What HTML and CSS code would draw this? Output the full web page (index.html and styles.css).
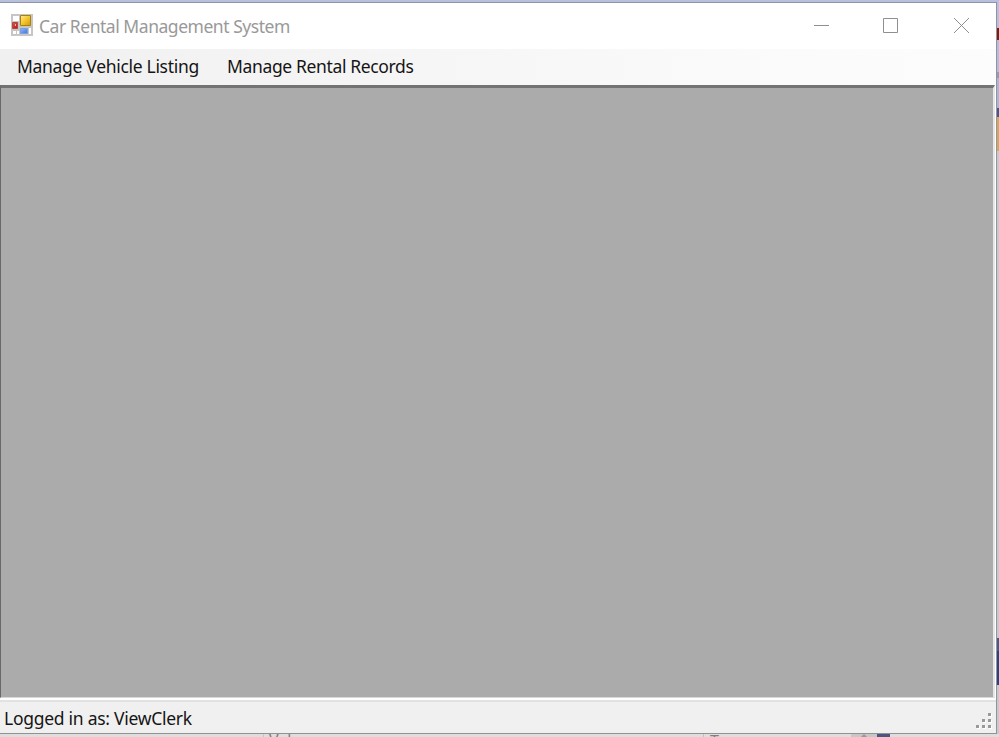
FILE: index.html
```html
<!DOCTYPE html>
<html lang="en">
<head>
<meta charset="utf-8">
<title>Car Rental Management System</title>
<link rel="stylesheet" href="styles.css">
</head>
<body>
<div class="desktop">
  <div class="main-row">
    <section class="window">
      <header class="titlebar">
        <svg class="app-icon" width="22" height="22" viewBox="0 0 22 22">
          <defs>
            <linearGradient id="gold" x2="1" y2="1"><stop stop-color="#ffeaa0"/><stop offset=".5" stop-color="#f5c52c"/><stop offset="1" stop-color="#d09a08"/></linearGradient>
            <linearGradient id="red" x2="1" y2="1"><stop stop-color="#e05a50"/><stop offset="1" stop-color="#a51c14"/></linearGradient>
            <linearGradient id="blue" x2="1" y2="1"><stop stop-color="#8fb8fa"/><stop offset="1" stop-color="#3c74dc"/></linearGradient>
          </defs>
          <path fill="#c6c6c6" d="M0 0h22v22H0z"/>
          <path fill="#fff" d="M2 2h6v5H2zM2 17h3v3H2zM6 17h2v3H6zM18 14h2v6h-2z"/>
          <path fill="url(#gold)" stroke="#a8820c" d="M9.500 1.500h10v10h-10z"/>
          <path fill="url(#red)" stroke="#b8443c" d="M1.500 8.500h5v6h-5z"/>
          <path fill="#f3b5ae" d="M4 10h1v2H4z"/>
          <path fill="url(#blue)" stroke="#7f9fdc" d="M9.500 14.500h7v5h-7z"/>
        </svg>
        <h1 class="title">Car Rental Management System</h1>
        <div class="controls">
          <svg width="15" height="15"><path d="M0 7.500h15"/></svg>
          <svg width="15" height="15"><path d="M.5.500h14v14H.500z"/></svg>
          <svg width="15" height="15"><path d="M0 0l15 15M15 0L0 15"/></svg>
        </div>
      </header>
      <nav class="menu">
        <span class="menu-item vehicles">Manage Vehicle Listing</span>
        <span class="menu-item rentals">Manage Rental Records</span>
      </nav>
      <main class="workspace"></main>
      <footer class="status">
        <span class="login">Logged in as: ViewClerk</span>
        <svg class="grip" width="17" height="17" fill="#999">
          <path fill="#fff" d="M14 2h3v3h-3zM8 8h3v3H8zM14 8h3v3h-3zM2 14h3v3H2zM8 14h3v3H8zM14 14h3v3h-3z"/>
          <path d="M13 1h3v3h-3zM7 7h3v3H7zM13 7h3v3h-3zM1 13h3v3H1zM7 13h3v3H7zM13 13h3v3h-3z"/>
        </svg>
      </footer>
    </section>
    <div class="side"></div>
  </div>
  <div class="behind">
    <span class="cell first"></span>
    <span class="cell second">Val</span>
    <span class="cell third">T</span>
    <span class="scroll"><svg width="6" height="3"><path fill="#999" d="M3 0l3 3H0z"/></svg></span>
    <span class="accent"></span>
  </div>
</div>
</body>
</html>
```
FILE: styles.css
```css
* { box-sizing: border-box; }
body { margin: 0; overflow: hidden; font-family: "Noto Sans", sans-serif; }
.desktop {
  width: 999px; height: 737px; padding-top: 2px; overflow: hidden;
  display: flex; flex-direction: column;
  background: linear-gradient(#b9c0df 0 2px, #d0d0d0 2px);
}
.main-row { display: flex; height: 732px; }
.window {
  width: 997px; display: flex; flex-direction: column; background: #fff;
  border: solid #8e94a5; border-width: 1px 1px 1px 0; border-bottom-color: #929292;
}
.titlebar { flex: none; height: 46px; display: flex; padding-left: 11px; }
.app-icon { margin-top: 11px; flex: none; }
.title {
  margin: 9px 0 0 6px; font-size: 17.5px; line-height: 28px; font-weight: 400;
  letter-spacing: -.46px; color: #999; white-space: nowrap;
}
.controls { margin: 15px 27px 0 auto; display: flex; gap: 54px; }
.controls svg { fill: none; stroke: #8f8f8f; stroke-width: 1; }
.controls svg:last-child { margin-left: 2px; }
.menu {
  flex: none; height: 36px; padding-left: 17px; display: flex;
  background: linear-gradient(90deg, #f0f0f0, #fbfbfb 80%, #fcfcfc);
}
.menu-item, .login {
  font-size: 17.5px; line-height: 35px; letter-spacing: -.31px;
  color: #151515; white-space: nowrap;
}
.vehicles { width: 210px; }
.rentals { letter-spacing: -.36px; }
.workspace {
  flex: none; height: 613px; background: #ababab; margin-right: 1px;
  border: solid; border-width: 3px 2px 1px 1px;
  border-color: #737373 #e6e6e6 #d8d8d8 #696969;
}
.status {
  flex: none; height: 35px; display: flex; align-items: flex-start;
  justify-content: space-between; padding: 2px 4px 0 4px;
  background: linear-gradient(#fff 0 2px, #e2e2e2 2px 4px, #f0f0f0 4px);
}
.login { line-height: 36px; letter-spacing: -.27px; }
.grip { margin-top: 12px; }
.side {
  width: 2px;
  background: linear-gradient(#b9c0df 0 26px, #7b1e10 26px 38px, #b6bdda 38px 70px, #969bae 70px 76px, #adb4d4 76px 106px, #4a5587 106px 115px, #d8a955 115px 149px, #c9c9c9 149px 636px, #4c5885 636px 649px, #2d427c 649px 683px, #c9c9c9 683px);
}
.behind { height: 3px; display: flex; overflow: hidden; background: #dedede; font-size: 16px; color: #808080; }
.cell { display: block; height: 3px; overflow: hidden; }
.first { width: 263px; }
.second { width: 440px; padding-left: 5px; border-left: 1px solid #c8c8c8; line-height: 12px; }
.third { width: 148px; padding-left: 6px; border-left: 1px solid #c0c0c8; line-height: 14px; }
.scroll { display: flex; width: 26px; padding-left: 10px; background: #c7c7c7; }
.accent { width: 13px; background: #4c5580; }
```
